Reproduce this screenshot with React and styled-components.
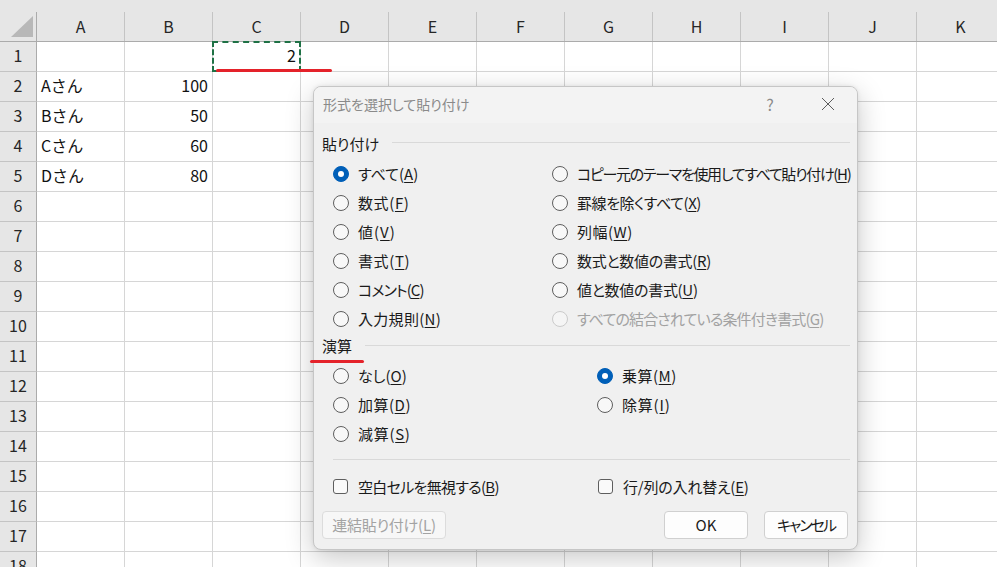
import React from 'react';
import styled, { createGlobalStyle } from 'styled-components';

const GlobalStyle = createGlobalStyle`
  html, body {
    margin:0;
    padding:0;
    background:#fff;
    overflow:hidden;
  }
  body {
    font-family:"Noto Sans CJK JP", "Noto Sans", sans-serif;
  }
`

const COLS = ['A', 'B', 'C', 'D', 'E', 'F', 'G', 'H', 'I', 'J', 'K'];

const DATA = {
    1: ['', '', '2'],
    2: ['Aさん', '100'],
    3: ['Bさん', '50'],
    4: ['Cさん', '60'],
    5: ['Dさん', '80'],
};

const Page=styled.div`
    position:relative;
    width:997px;
    height:567px;
    overflow:hidden;
    background:#fff;
`
const Sheet=styled.div`
    display:flex;
    flex-direction:column;
    width:1010px;
`
const HeaderRow=styled.div`
    display:flex;
    align-items:flex-end;
    height:42px;
    box-sizing:border-box;
    background:#e6e6e6;
    border-bottom:1px solid #ababab;
`
const HeadCell=styled.div`
    box-sizing:border-box;
    width:${p => p.$w}px;
    height:29px;
    flex-shrink:0;
    border-right:1px solid ${p => p.$corner ? '#ababab' : '#c4c4c4'};
    display:flex;
    align-items:center;
    justify-content:center;
    padding-bottom:${p => p.$corner ? 0 : 2}px;
    font-size:16px;
    color:#262626;
`
const Row=styled.div`
    display:flex;
    height:30px;
`
const RowHead=styled.div`
    box-sizing:border-box;
    width:37px;
    flex-shrink:0;
    background:#e6e6e6;
    border-right:1px solid #ababab;
    border-bottom:1px solid #c4c4c4;
    display:flex;
    align-items:center;
    justify-content:center;
    padding-bottom:3px;
    font-size:16px;
    color:#262626;
`
const Cell=styled.div`
    position:relative;
    box-sizing:border-box;
    width:88px;
    flex-shrink:0;
    border-right:1px solid #d6d6d6;
    border-bottom:1px solid #d6d6d6;
    display:flex;
    align-items:center;
    justify-content:${p => p.$num ? 'flex-end' : 'flex-start'};
    padding:0 4px 3px 4px;
    font-size:16px;
    color:#111;
    ${p => p.$copied && `
        &::after {
            content:'';
            position:absolute;
            left:-1px;
            top:-1px;
            right:-1px;
            bottom:-1px;
            border:2px dashed #1e7145;
        }
    `}
`
const Mark=styled.div`
    position:absolute;
    left:${p => p.$x}px;
    top:${p => p.$y}px;
    width:${p => p.$w}px;
    height:3px;
    border-radius:2px;
    background:#e4222a;
    z-index:5;
`

const Dialog=styled.div`
    position:absolute;
    left:313px;
    top:86px;
    width:545px;
    height:464px;
    box-sizing:border-box;
    background:#f0f0f0;
    border:1px solid #c6c6c6;
    border-radius:8px;
    box-shadow:0 8px 28px rgba(0,0,0,0.22), 0 0 4px rgba(0,0,0,0.08);
    display:flex;
    flex-direction:column;
    overflow:hidden;
    font-feature-settings:"palt";
    color:#1a1a1a;
`
const TitleBar=styled.div`
    height:36px;
    flex-shrink:0;
    display:flex;
    align-items:center;
    background:#f3f3f3;
    padding-left:9px;
`
const Title=styled.div`
    flex:1;
    font-size:14px;
    color:#8a8a8a;
    padding-bottom:3px;
`
const TitleBtn=styled.div`
    width:46px;
    height:30px;
    display:flex;
    align-items:center;
    justify-content:center;
    font-size:16px;
    color:#8a8a8a;
    margin-left:${p => p.$gap || 0}px;
    padding-bottom:2px;
`
const Body=styled.div`
    flex:1;
    display:flex;
    flex-direction:column;
    padding:0 7px 0 8px;
`
const SectionHead=styled.div`
    display:flex;
    align-items:center;
    gap:13px;
    height:24px;
    margin-top:${p => p.$top}px;
    font-size:15px;
`
const Rule=styled.div`
    flex:1;
    height:1px;
    background:#d9d9d9;
    margin-left:${p => p.$left || 0}px;
    margin-top:${p => p.$top || 0}px;
`
const Separator=styled.div`
    height:1px;
    background:#d9d9d9;
    margin:11px 0 0 11px;
`
const OptionGrid=styled.div`
    display:grid;
    grid-template-columns:${p => p.$col}px 1fr;
    grid-template-rows:repeat(${p => p.$rows}, 29px);
    grid-auto-flow:column;
    padding-left:11px;
    margin-top:${p => p.$top}px;
`
const Option=styled.label`
    display:flex;
    align-items:center;
    font-size:15px;
    line-height:20px;
    letter-spacing:${p => p.$track || 0}px;
    color:${p => p.$disabled ? '#a2a2a2' : '#1a1a1a'};
    white-space:nowrap;
`
const RadioMark=styled.span`
    width:16px;
    height:16px;
    box-sizing:border-box;
    border-radius:50%;
    flex-shrink:0;
    margin-right:9px;
    border:1px solid ${p => p.$checked ? '#005fb8' : p.$disabled ? '#cbcbcb' : '#5e5e5e'};
    background:${p => p.$checked ? '#005fb8' : p.$disabled ? '#f5f5f5' : '#f8f8f8'};
    display:flex;
    align-items:center;
    justify-content:center;
    &::after {
        content:'';
        width:6px;
        height:6px;
        border-radius:50%;
        background:#fff;
        display:${p => p.$checked ? 'block' : 'none'};
    }
`
const CheckMark=styled.span`
    width:15px;
    height:15px;
    box-sizing:border-box;
    border-radius:3px;
    flex-shrink:0;
    margin-right:10px;
    border:1px solid #5e5e5e;
    background:#fafafa;
`
const Key=styled.span`
    text-decoration:underline;
    text-underline-offset:2px;
`
const ButtonRow=styled.div`
    display:flex;
    align-items:center;
    margin-top:10px;
    margin-right:2px;
    height:28px;
`
const Spacer=styled.div`
    flex:1;
`
const Button=styled.div`
    box-sizing:border-box;
    width:${p => p.$w}px;
    height:28px;
    margin-left:${p => p.$gap || 0}px;
    border:1px solid ${p => p.$disabled ? '#dcdcdc' : '#d0d0d0'};
    border-radius:4px;
    background:${p => p.$disabled ? '#f7f7f7' : '#fdfdfd'};
    color:${p => p.$disabled ? '#a3a3a3' : '#1a1a1a'};
    display:flex;
    align-items:center;
    justify-content:center;
    padding-bottom:1px;
    font-size:15px;
    letter-spacing:${p => p.$track || 0}px;
`

const Radio = ({ text, k, checked, disabled, track }) => (
    <Option $disabled={disabled} $track={track}>
        <RadioMark $checked={checked} $disabled={disabled} />
        {text}(<Key>{k}</Key>)
    </Option>
);

const Check = ({ text, k, track }) => (
    <Option $track={track}>
        <CheckMark />
        {text}(<Key>{k}</Key>)
    </Option>
);

// text, key, checked, disabled, letter-spacing
const PASTE = [
    ['すべて', 'A', true, false, 0],
    ['数式', 'F', false, false, 0.6],
    ['値', 'V', false, false, 1],
    ['書式', 'T', false, false, 0.6],
    ['コメント', 'C', false, false, -0.9],
    ['入力規則', 'N', false, false, 0.3],
    ['コピー元のテーマを使用してすべて貼り付け', 'H', false, false, -1.3],
    ['罫線を除くすべて', 'X', false, false, -0.45],
    ['列幅', 'W', false, false, 0.5],
    ['数式と数値の書式', 'R', false, false, -0.3],
    ['値と数値の書式', 'U', false, false, -0.3],
    ['すべての結合されている条件付き書式', 'G', false, true, -0.85],
];

const OPS = [
    ['なし', 'O', false, 0],
    ['加算', 'D', false, 0.5],
    ['減算', 'S', false, 0.7],
    ['乗算', 'M', true, 0.5],
    ['除算', 'I', false, 0.8],
];

const App = () => {
    const rows = Array.from({ length: 18 }, (_, i) => i + 1);
    return (
        <Page>
            <GlobalStyle />
            <Sheet>
                <HeaderRow>
                    <HeadCell $w={37} $corner>
                        <svg width="36" height="29" viewBox="0 0 36 29">
                            <polygon points="11,25 33,4 33,25" fill="#b8b8b8" />
                        </svg>
                    </HeadCell>
                    {COLS.map(c => (
                        <HeadCell key={c} $w={88}>{c}</HeadCell>
                    ))}
                </HeaderRow>
                {rows.map(r => (
                    <Row key={r}>
                        <RowHead>{r}</RowHead>
                        {COLS.map((c, ci) => {
                            const v = (DATA[r] || [])[ci] || '';
                            return (
                                <Cell key={c} $num={ci > 0} $copied={r === 1 && ci === 2}>
                                    {v}
                                </Cell>
                            );
                        })}
                    </Row>
                ))}
            </Sheet>

            <Mark $x={216} $y={69} $w={116} />

            <Dialog>
                <TitleBar>
                    <Title>形式を選択して貼り付け</Title>
                    <TitleBtn>?</TitleBtn>
                    <TitleBtn $gap={12}>
                        <svg width="14" height="14" viewBox="0 0 14 14">
                            <path d="M1 1 L13 13 M13 1 L1 13" stroke="#5c5c5c" strokeWidth="1" fill="none" />
                        </svg>
                    </TitleBtn>
                    <div style={{ width: 6 }} />
                </TitleBar>
                <Body>
                    <SectionHead $top={8}>
                        貼り付け
                        <Rule $top={-1} />
                    </SectionHead>
                    <OptionGrid $col={219} $rows={6} $top={4}>
                        {PASTE.map(([t, k, ch, dis, tr]) => (
                            <Radio key={k} text={t} k={k} checked={ch} disabled={dis} track={tr} />
                        ))}
                    </OptionGrid>
                    <SectionHead $top={0}>
                        演算
                        <Rule />
                    </SectionHead>
                    <OptionGrid $col={264} $rows={3} $top={4}>
                        {OPS.map(([t, k, ch, tr]) => (
                            <Radio key={k} text={t} k={k} checked={ch} track={tr} />
                        ))}
                    </OptionGrid>
                    <Separator />
                    <OptionGrid $col={265} $rows={1} $top={12}>
                        <Check text="空白セルを無視する" k="B" track={-0.7} />
                        <Check text="行/列の入れ替え" k="E" track={-0.2} />
                    </OptionGrid>
                    <ButtonRow>
                        <Button $w={124} $disabled $track={-0.2}>連結貼り付け(<Key>L</Key>)</Button>
                        <Spacer />
                        <Button $w={84}>OK</Button>
                        <Button $w={84} $gap={16} $track={-2}>キャンセル</Button>
                    </ButtonRow>
                </Body>
            </Dialog>

            <Mark $x={310} $y={360} $w={54} />
        </Page>
    );
}

export default App;
